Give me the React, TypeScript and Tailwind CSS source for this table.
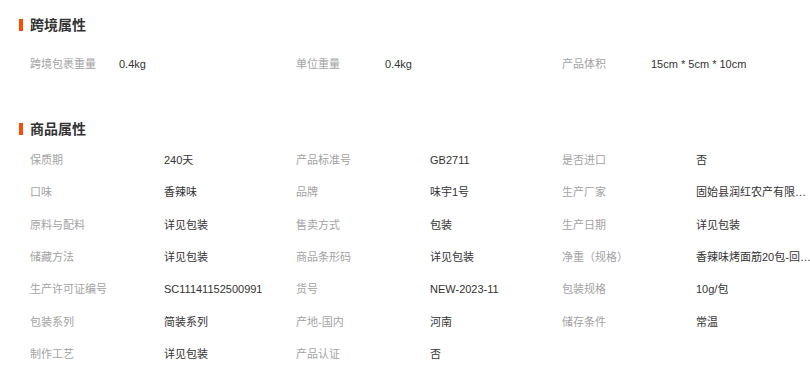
import React from "react";

type Attr = { label: string; value: string };

const crossBorder: Attr[] = [
  { label: "跨境包裹重量", value: "0.4kg" },
  { label: "单位重量", value: "0.4kg" },
  { label: "产品体积", value: "15cm * 5cm * 10cm" },
];

const productAttrs: Attr[] = [
  { label: "保质期", value: "240天" },
  { label: "产品标准号", value: "GB2711" },
  { label: "是否进口", value: "否" },
  { label: "口味", value: "香辣味" },
  { label: "品牌", value: "味宇1号" },
  { label: "生产厂家", value: "固始县润红农产有限公司" },
  { label: "原料与配料", value: "详见包装" },
  { label: "售卖方式", value: "包装" },
  { label: "生产日期", value: "详见包装" },
  { label: "储藏方法", value: "详见包装" },
  { label: "商品条形码", value: "详见包装" },
  { label: "净重（规格）", value: "香辣味烤面筋20包-回味经典" },
  { label: "生产许可证编号", value: "SC11141152500991" },
  { label: "货号", value: "NEW-2023-11" },
  { label: "包装规格", value: "10g/包" },
  { label: "包装系列", value: "简装系列" },
  { label: "产地-国内", value: "河南" },
  { label: "储存条件", value: "常温" },
  { label: "制作工艺", value: "详见包装" },
  { label: "产品认证", value: "否" },
];

const SectionTitle = ({ title }: { title: string }) => (
  <div className="flex items-center h-5 pl-[19px]">
    <span className="w-1 h-3 bg-[#ff4a00] mr-[7px]" />
    <span className="text-[14px] leading-5 font-bold text-[#333]">{title}</span>
  </div>
);

const AttrCell = ({ item, labelWidth }: { item: Attr; labelWidth: string }) => (
  <div className="flex items-center w-[266px] shrink-0 h-full">
    <span className={`${labelWidth} shrink-0 whitespace-nowrap text-[#a3a3a3]`}>{item.label}</span>
    <span className="truncate max-w-[115px] text-[#333]">{item.value}</span>
  </div>
);

export default function App() {
  const rows: Attr[][] = [];
  for (let i = 0; i < productAttrs.length; i += 3) {
    rows.push(productAttrs.slice(i, i + 3));
  }

  return (
    <div
      className="w-[810px] h-[374px] bg-white overflow-hidden text-[11px] leading-4"
      style={{ fontFamily: '"Liberation Sans", "Noto Sans CJK SC", sans-serif' }}
    >
      <div className="pt-[15px]">
        <SectionTitle title="跨境属性" />
        <div className="flex pl-[30px] mt-[13px] h-8">
          {crossBorder.map((a) => (
            <AttrCell key={a.label} item={a} labelWidth="w-[89px]" />
          ))}
        </div>
      </div>

      <div className="mt-[39px]">
        <SectionTitle title="商品属性" />
        <div className="mt-[5px] pl-[30px]">
          {rows.map((r, i) => (
            <div key={i} className="flex h-[32.3px]">
              {r.map((a) => (
                <AttrCell key={a.label} item={a} labelWidth="w-[134px]" />
              ))}
            </div>
          ))}
        </div>
      </div>
    </div>
  );
}
